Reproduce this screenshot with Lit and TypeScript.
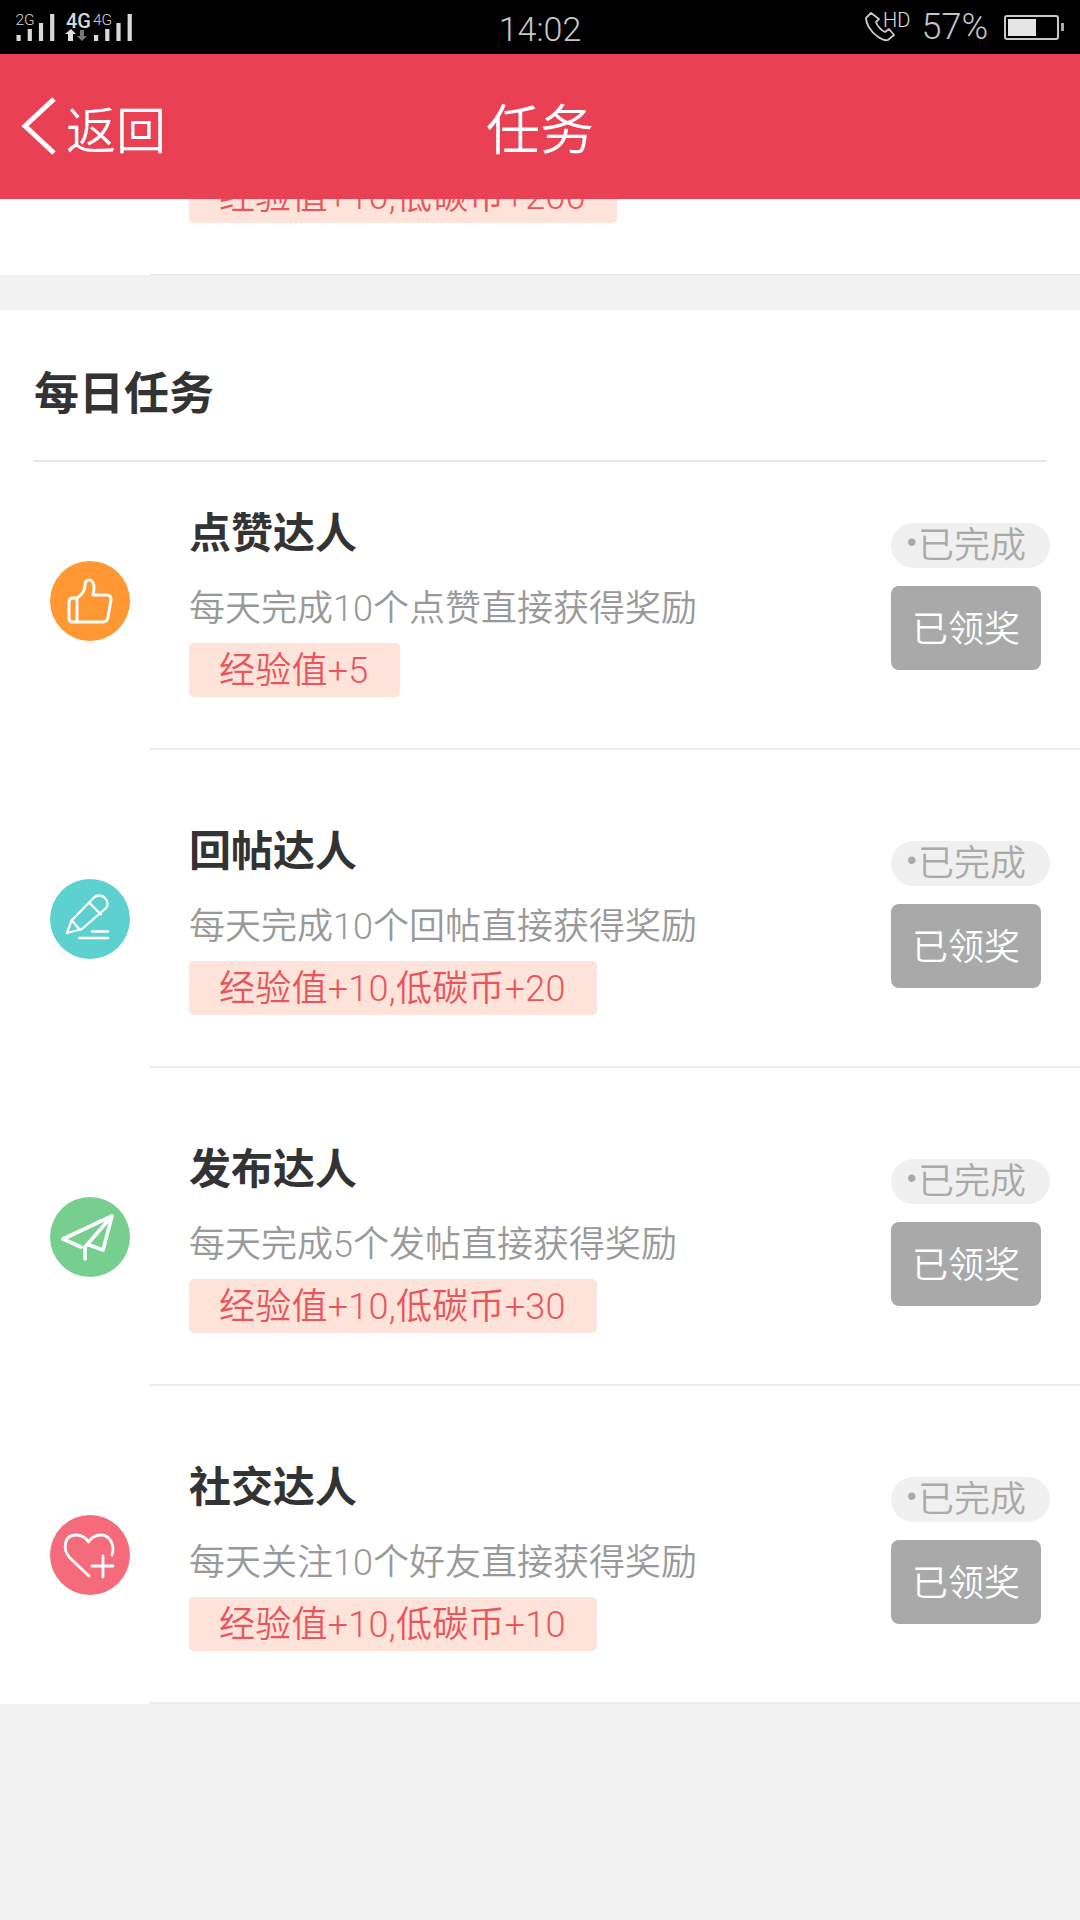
import { LitElement, html, css, svg } from "lit";
import { customElement } from "lit/decorators.js";

const ICONS: Record<string, unknown> = {
  thumb: svg`<path d="M27 37V61M23 37H27C32 34 35 30 35 24C35 20 37 19 39 19C42 19 44 22 44 26C44 29 43.500 31 43 34H56C60 34 61.500 36 61 39L58 56C57.500 59 55.500 61 53 61H23C20.500 61 19 59.500 19 57V41C19 38.500 20.500 37 23 37Z"/>`,
  pencil: svg`<g stroke-width="2.300"><path d="M17 54L21.500 41.500L44 18.500C47 15.500 52 16 55 19C58 22 58.500 26.500 55.500 29.500L32 50ZM39 23.500L51 35.500M22 41.500L30 51"/><path d="M42 52.500H58M29 59H58"/></g>`,
  plane: svg`<path stroke-width="3.600" d="M62 19L13 42L31 50M62 19L53 53L38 47.500M62 19L35 50V62"/>`,
  heart: svg`<g stroke-width="2.800"><path d="M39 61L20 43C12 34 14 20 26 20C32 20 36 23 38.500 27C41 23 46 20 51 20C60 20 65 30 62 40"/><path d="M42 51H63M53 41V62"/></g>`,
};

const ROWS = [
  { icon: "thumb", color: "#ff9832", title: "点赞达人", desc: "每天完成10个点赞直接获得奖励", reward: "经验值+5" },
  { icon: "pencil", color: "#5dd1cf", title: "回帖达人", desc: "每天完成10个回帖直接获得奖励", reward: "经验值+10,低碳币+20" },
  { icon: "plane", color: "#77cf8f", title: "发布达人", desc: "每天完成5个发帖直接获得奖励", reward: "经验值+10,低碳币+30" },
  { icon: "heart", color: "#f56b7c", title: "社交达人", desc: "每天关注10个好友直接获得奖励", reward: "经验值+10,低碳币+10" },
];

@customElement("app-root")
export class AppRoot extends LitElement {
  static styles = css`
    :host {
      display: block;
      width: 1080px;
      height: 1920px;
      overflow: hidden;
      background: #f2f2f2;
      font-family: "Noto Sans CJK SC", "Noto Sans", sans-serif;
      font-weight: 350;
    }
    .status {
      height: 54px;
      background: #000;
      display: grid;
      grid-template-columns: 1fr auto 1fr;
      align-items: center;
      color: #c4c4c4;
      font-family: "Roboto", sans-serif;
    }
    .signal { display: block; }
    .signal text { font-family: "Roboto", sans-serif; fill: #d8d8d8; }
    .time { font-size: 34px; font-weight: 300; color: #c8c8c8; padding-top: 4px; }
    .status-right { display: flex; align-items: center; justify-content: flex-end; padding-right: 16px; }
    .phone { margin-right: -8px; }
    .pct { font-size: 36px; font-weight: 300; margin-left: 12px; line-height: 54px; }
    .battery {
      width: 55px; height: 25px; box-sizing: border-box;
      border: 2px solid #c8c8c8; border-radius: 3px; padding: 2px;
      margin-left: 16px; display: flex;
    }
    .battery i { display: block; width: 28px; background: #e4e4e4; }
    .nub { width: 3px; height: 8px; background: #aaa; margin-left: 2px; }
    .bar {
      height: 145px;
      background: #ea4054;
      color: #fff;
      display: grid;
      grid-template-columns: 1fr auto 1fr;
      align-items: center;
    }
    .back { display: flex; align-items: center; font-size: 50px; line-height: 60px; padding-left: 21px; }
    .back svg { margin-right: 9px; }
    .bar-title { font-size: 54px; line-height: 60px; }
    .clip {
      height: 76px;
      background: #fff;
      overflow: hidden;
      position: relative;
      display: flex;
      flex-direction: column;
      justify-content: flex-end;
      padding: 0 0 52px 189px;
      box-sizing: border-box;
    }
    .clip::after {
      content: "";
      position: absolute;
      left: 150px; right: 0; bottom: 0;
      height: 1px;
      background: #e6e6e6;
    }
    .clip .tag { align-self: flex-start; flex: none; }
    .section { margin-top: 35px; background: #fff; }
    .heading {
      margin: 0 33px;
      padding: 53px 0 41px 1px;
      font-size: 45px;
      line-height: 56px;
      font-weight: 700;
      color: #333;
      border-bottom: 2px solid #e6e6e6;
    }
    .row { display: flex; align-items: flex-start; padding-left: 50px; }
    .icon {
      width: 80px; height: 80px; flex: none;
      border-radius: 50%;
      margin-top: 129px;
    }
    .row:first-child .icon { margin-top: 99px; }
    .icon svg { display: block; fill: none; stroke: #fff; stroke-width: 3; stroke-linecap: round; stroke-linejoin: round; }
    .body {
      flex: 1;
      padding: 73px 0 51px 0;
      border-bottom: 2px solid #ececec;
      margin-left: 20px;
      display: flex;
      align-items: flex-start;
    }
    .row:first-child .body { padding-top: 43px; }
    .text { flex: 1; margin-left: 39px; display: flex; flex-direction: column; align-items: flex-start; }
    .title { font-size: 42px; line-height: 50px; margin-bottom: 6px; font-weight: 700; color: #333; }
    .desc {
      font-family: "Roboto", "Noto Sans CJK SC", sans-serif;
      font-size: 36px; line-height: 56px; margin: 20px 0 -6px; color: #999;
    }
    .tag {
      font-family: "Roboto", "Noto Sans CJK SC", sans-serif;
      margin-top: 12px;
      height: 54px;
      line-height: 57px;
      padding: 0 31px 0 30px;
      font-size: 36px;
      letter-spacing: 0.25px;
      color: #e8565b;
      background: #fde3d9;
      border-radius: 5px;
      overflow: hidden;
    }
    .side { width: 189px; flex: none; padding-top: 18px; display: flex; flex-direction: column; align-items: flex-start; }
    .pill {
      width: 159px; height: 45px; line-height: 39px;
      box-sizing: border-box; padding-left: 16px;
      border-radius: 23px;
      background: #f0f0f0;
      color: #aaa;
      font-size: 36px;
      white-space: nowrap;
      display: flex;
    }
    .dot { font-family: "Liberation Sans", sans-serif; font-size: 27px; width: 11px; flex: none; }
    .btn {
      margin-top: 18px;
      width: 150px; height: 84px; line-height: 80px;
      text-align: center;
      border-radius: 8px;
      background: #a9a9a9;
      color: #fff;
      font-size: 36px;
    }
  `;

  private bars(x: number) {
    const hs = [6, 12, 18, 27];
    return hs.map((h, i) => svg`<rect x=${x + i * 11.2} y=${41 - h} width="4.200" height=${h} fill="#d8d8d8"/>`);
  }

  render() {
    return html`
      <div class="status">
        <svg class="signal" width="145" height="54" viewBox="0 0 145 54">
          <text x="15.500" y="25" font-size="15.500">2G</text>
          ${this.bars(16.5)}
          <text x="66" y="28" font-size="20" font-weight="500">4G</text>
          <path d="M68 41V34H65L71 29L76 34H73V41Z" fill="#e0e0e0"/>
          <path d="M80 30V36H77L82 41L87 36H84V30Z" fill="#777"/>
          <text x="93" y="25" font-size="15.500">4G</text>
          ${this.bars(94)}
        </svg>
        <div class="time">14:02</div>
        <div class="status-right">
          <svg class="phone" width="52" height="32" viewBox="0 0 52 32" fill="none" stroke="#c8c8c8" stroke-width="1.800" stroke-linejoin="round">
            <path d="M6 2L1 7C1 13 6 21 12 25C16 28 20 30 23 29L29 24L24 18L20 21C17 20 12 15 11 11L14 8Z"/>
            <text x="18" y="16" font-size="20" fill="#e0e0e0" stroke="none" font-family="Roboto">HD</text>
          </svg>
          <span class="pct">57%</span>
          <div class="battery"><i></i></div>
          <div class="nub"></div>
        </div>
      </div>
      <div class="bar">
        <div class="back">
          <svg width="36" height="60" viewBox="0 0 36 60" fill="none" stroke="#fff" stroke-width="5">
            <path d="M33 2L4 29L33 56"/>
          </svg>
          <span>返回</span>
        </div>
        <div class="bar-title">任务</div>
        <div></div>
      </div>
      <div class="clip"><div class="tag">经验值+10,低碳币+200</div></div>
      <div class="section">
        <div class="heading">每日任务</div>
        <div>
          ${ROWS.map(
            (r) => html`
              <div class="row">
                <div class="icon" style="background:${r.color}">
                  <svg width="80" height="80" viewBox="0 0 80 80">${ICONS[r.icon]}</svg>
                </div>
                <div class="body">
                  <div class="text">
                    <div class="title">${r.title}</div>
                    <div class="desc">${r.desc}</div>
                    <div class="tag">${r.reward}</div>
                  </div>
                  <div class="side">
                    <div class="pill"><span class="dot">•</span>已完成</div>
                    <div class="btn">已领奖</div>
                  </div>
                </div>
              </div>
            `
          )}
        </div>
      </div>
    `;
  }
}
